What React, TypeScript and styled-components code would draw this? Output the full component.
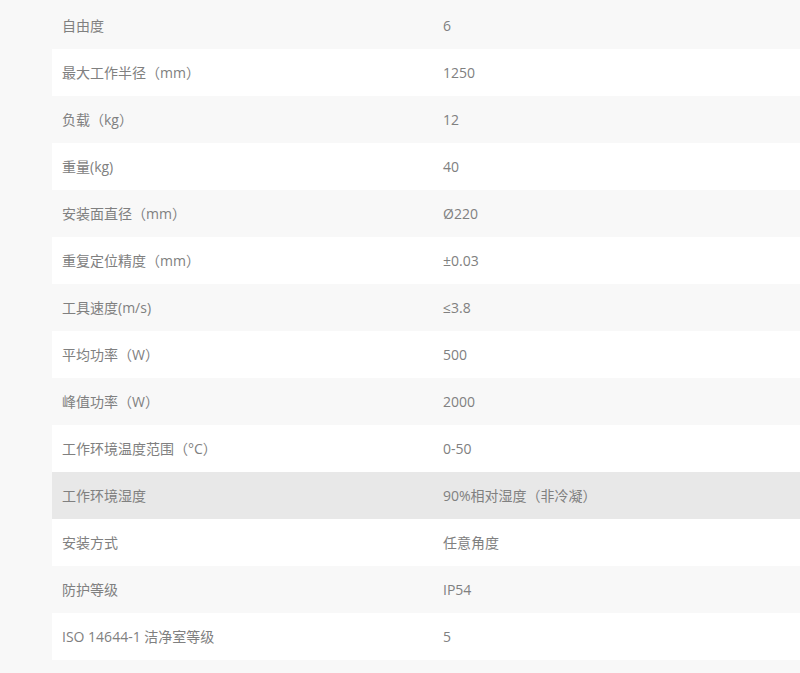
import React from "react";
import styled, { createGlobalStyle } from "styled-components";

const GlobalStyle = createGlobalStyle`
  html, body {
    margin: 0;
    padding: 0;
    background: #f8f8f8;
    overflow: hidden;
  }
  body {
    font-family: "Open Sans", "Noto Sans CJK SC", sans-serif;
  }
`;

const Page = styled.div`
  padding: 2px 0 0 52px;
  height: 673px;
  box-sizing: border-box;
`;

const Table = styled.div`
  display: flex;
  flex-direction: column;
`;

const Row = styled.div<{ $variant: "odd" | "even" | "active" }>`
  display: grid;
  grid-template-columns: 381px 1fr;
  height: 47px;
  align-items: center;
  background: ${(p) =>
    p.$variant === "active" ? "#e8e8e8" : p.$variant === "even" ? "#ffffff" : "#f8f8f8"};
`;

const Cell = styled.div`
  padding-left: 10px;
  font-size: 14px;
  line-height: 20px;
  color: #808080;
  white-space: nowrap;
`;

const specs: [string, string][] = [
  ["自由度", "6"],
  ["最大工作半径（mm）", "1250"],
  ["负载（kg）", "12"],
  ["重量(kg)", "40"],
  ["安装面直径（mm）", "Ø220"],
  ["重复定位精度（mm）", "±0.03"],
  ["工具速度(m/s)", "≤3.8"],
  ["平均功率（W）", "500"],
  ["峰值功率（W）", "2000"],
  ["工作环境温度范围（°C）", "0-50"],
  ["工作环境湿度", "90%相对湿度（非冷凝）"],
  ["安装方式", "任意角度"],
  ["防护等级", "IP54"],
  ["ISO 14644-1 洁净室等级", "5"],
];

export default function App() {
  return (
    <>
      <GlobalStyle />
      <Page>
        <Table>
          {specs.map(([k, v], i) => (
            <Row key={k} $variant={i === 10 ? "active" : i % 2 === 1 ? "even" : "odd"}>
              <Cell>{k}</Cell>
              <Cell>{v}</Cell>
            </Row>
          ))}
        </Table>
      </Page>
    </>
  );
}
